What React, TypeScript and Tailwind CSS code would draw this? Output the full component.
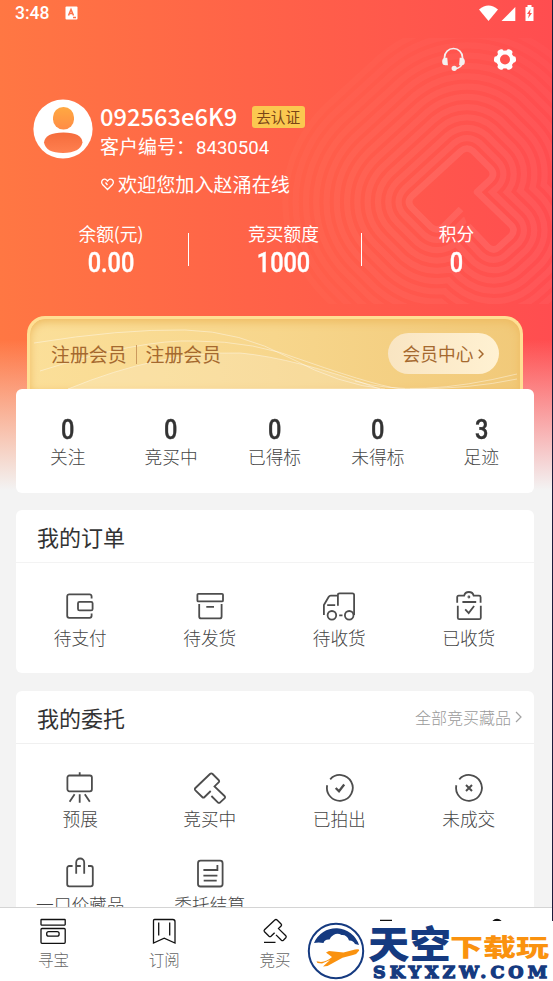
import React from "react";

type Item = {
    label: string;
    icon: React.ReactNode;
}

const stats = [
    { label: "关注", value: "0" },
    { label: "竞买中", value: "0" },
    { label: "已得标", value: "0" },
    { label: "未得标", value: "0" },
    { label: "足迹", value: "3" },
];

const orders: Item[] = [
    {
        label: "待支付",
        icon: <>
            <path d="M27.6 8.6V6.4a2 2 0 0 0-2-2H5.2a2 2 0 0 0-2 2v19.4a2 2 0 0 0 2 2h20.4a2 2 0 0 0 2-2v-2.2"/>
            <rect x="14" y="11.8" width="14.6" height="8.6" rx="1.5"/>
        </>,
    },
    {
        label: "待发货",
        icon: <>
            <rect x="3.4" y="3.8" width="25.6" height="7.6" rx="1"/>
            <path d="M5.2 14v12.4a2 2 0 0 0 2 2h18.4a2 2 0 0 0 2-2V14M12.3 16.8H20"/>
        </>,
    },
    {
        label: "待收货",
        icon: <>
            <path d="M.9 25V15L5.6 7q.8-1.3 2.2-1.3h7.1M14.9 15.8V5q0-1.7 1.7-1.7h12.8q1.7 0 1.7 1.7v20M4.2 15.1h8M16.2 25.3h3.3"/>
            <circle cx="8.9" cy="25.3" r="4.3"/>
            <circle cx="26.2" cy="25.3" r="4.3"/>
        </>,
    },
    {
        label: "已收货",
        icon: <>
            <path d="M4.2 12.7V7.2q0-1.5 1.5-1.5h5.4q.9-3.7 4.8-3.7t4.8 3.7h5.4q1.5 0 1.5 1.5v5.5M9.4 12h13.8M4.8 15.7v12q0 1.5 1.5 1.5h20q1.5 0 1.5-1.5v-12M12.2 19.3l3.5 3.7 5.4-7"/>
            <circle cx="15.9" cy="7" r=".5"/>
        </>,
    },
];

const commissions: Item[] = [
    {
        label: "预展",
        icon: <>
            <rect x="3.4" y="4.5" width="24.5" height="15.8" rx="2"/>
            <path d="M15.7 1.3v3.2M15.7 23.3v8.5M10.6 23.3l-5 7.5M20.8 23.3l5 7.5"/>
        </>,
    },
    {
        label: "竞买中",
        icon: <path d="M16.7 20 10.6 26q-1.2 1.2-2.4 0L1.4 19.4q-1.2-1.2 0-2.4L16 3q1.3-1.3 2.6 0l6 6q1.2 1.2 0 2.4L20.5 15.4l10 9.6q1.2 1.2 0 2.3L26.2 31.3q-1.2 1.2-2.4 0L17.4 25"/>,
    },
    {
        label: "已拍出",
        icon: <>
            <path d="M7.2 8.3A12.9 12.9 0 1 1 4.2 14.3"/>
            <path d="m12.7 17 3.3 3.3 5.2-6.8" strokeWidth="2.3"/>
        </>,
    },
    {
        label: "未成交",
        icon: <>
            <path d="M6.3 8.3A12.9 12.9 0 1 1 3.3 14.3"/>
            <path d="m13 14 6 6M19 14l-6 6" strokeWidth="2"/>
        </>,
    },
    {
        label: "一口价藏品",
        icon: <path d="M8.6 9H5.2a2 2 0 0 0-2 2v16.3a2 2 0 0 0 2 2h21.6a2 2 0 0 0 2-2V11a2 2 0 0 0-2-2H24M12.2 16.7V5.5a4 4 0 0 1 8 0v11.2M12.2 9h4.6"/>,
    },
    {
        label: "委托结算",
        icon: <>
            <rect x="4" y="3.7" width="24.6" height="25.8" rx="2.5"/>
            <path d="M9.4 13h14V8M9.4 18.7h14M9.7 23.7h13"/>
        </>,
    },
];

const tabs: Item[] = [
    {
        label: "寻宝",
        icon: <>
            <rect x="4" y="4.5" width="24.2" height="5.6" rx=".5"/>
            <rect x="4" y="13.5" width="24.2" height="14.8" rx="1"/>
            <rect x="9.7" y="16.6" width="12.4" height="4.6" rx="2"/>
        </>,
    },
    {
        label: "订阅",
        icon: <path d="M5.5 28V5.5q0-1 1-1h18.3q2.2 0 2.2 2.2V28l-10.8-4.8ZM10.7 7.5v13M21.7 7.5v13"/>,
    },
    {
        label: "竞买",
        icon: <path d="M15.6 17.7 12 21.2q-1 .9-2 0l-4.500-4.500q-.9-1 0-2L15.800 5q1.200-1 2.300 0l4 4q1 1 0 2l-2.600 2.600 7.300 7.200q.9 1 0 2l-2.400 2.400q-1 .9-2 0l-5.400-5.300M5 27.400h11.500"/>,
    },
    { label: "", icon: <path d="M10 5.5h12M6 10h20v18H6Z"/> },
    { label: "", icon: <><circle cx="16" cy="10" r="5.5" fill="#111"/><path d="M5 28q0-11 11-11t11 11Z"/></> },
];

const gavel = "M461 209 443 227q-6 5-12 0L412 208q-6-6 0-12L461 151q6-5 12 0l17 17q6 6 0 12L477 192l34 33q5 5 0 11L499 247q-5 5-11 0L468 226";

// evenly spaced rings around the gavel, from the outside in
const rings = Array.from({ length: 13 }, (_, i) => 12 - i);

function Ripples() {
    return (
        <svg className="absolute left-0 top-0" width="552" height="304" viewBox="0 0 552 304" fill="none">
            <mask id="ripples" maskUnits="userSpaceOnUse" x="0" y="0" width="552" height="304">
                <g strokeLinejoin="round" strokeLinecap="butt">
                    {rings.map(k => {
                        const level = Math.round(255 * (k === 0 ? 1 : 0.76 - k * 0.045));
                        return (
                            <g key={k}>
                                <path d={gavel} fill="none" stroke={`rgb(${level},${level},${level})`} strokeWidth={k * 20.6 + 6.5}/>
                                {k > 0 && <path d={gavel} fill="black" stroke="black" strokeWidth={k * 20.6 - 6}/>}
                            </g>
                        )
                    })}
                </g>
            </mask>
            <rect x="280" y="38" width="272" height="266" fill="#fff" fillOpacity=".085" mask="url(#ripples)"/>
        </svg>
    )
}

function Num({ children, className }: { children: React.ReactNode; className?: string }) {
    return (
        <span className={"block scale-x-[0.84] font-[Roboto] text-[28px] leading-7 font-medium [-webkit-text-stroke:0.4px_currentColor] " + (className ?? "")}>
            {children}
        </span>
    )
}

function IconCell({ item }: { item: Item }) {
    return (
        <li className="flex flex-col items-center">
            <svg width="32" height="33" viewBox="0 0 32 33" fill="none" stroke="#4d4d4d" strokeWidth="1.8">{item.icon}</svg>
            <span className="mt-[2px] text-[17.7px] leading-6 font-light whitespace-nowrap text-[#444]">{item.label}</span>
        </li>
    )
}

function StatusBar() {
    return (
        <div className="flex h-[26px] items-center justify-between pr-[18px] pl-[15px] text-white">
            <div className="flex items-center gap-4">
                <span className="font-[Roboto] text-[17.5px] leading-5 font-medium">3:48</span>
                <svg width="13" height="14" viewBox="0 0 13 14">
                    <rect x=".5" y=".5" width="12" height="13" rx="1" fill="#fff"/>
                    <path d="m3.5 9.5 2.5-6 2.5 6M4.5 7.5h3M8 11.5h3" fill="none" stroke="#ff7048" strokeWidth="1.5"/>
                </svg>
            </div>
            <svg width="56" height="17" viewBox="0 0 56 17" fill="#fff">
                <path d="M0 4.5Q9.5-3.5 19 4.5L9.5 16Z"/>
                <path d="M36.3 2v14H22.5Z"/>
                <path d="M46.500 2h2V0h4v2h2v14h-8Z"/>
                <path d="m51.500 4-3.500 5h2l-1 4.500L53 8h-2Z" fill="#ff5250"/>
            </svg>
        </div>
    )
}

function Watermark() {
    return (
        <svg className="absolute bottom-0 left-[300px]" width="253" height="60" viewBox="0 0 253 60">
            <rect x="8" width="245" height="60" fill="#fff"/>
            <circle cx="36" cy="30" r="27.2" fill="#fff" stroke="#153a80" strokeWidth="2"/>
            <path d="M14 22A24 24 0 0 1 59 24l-4-1q-2-4-6-3.5-2-6-7.5-5.5-4-2.5-8 0-3 1.5-4 4.5-5-.5-6 3.5-5-1-9.500 0Z" fill="#153a80"/>
            <path d="M16.5 40.2 21 41q6-.5 11-5l-6-4.5 3-1.5 14.5 1.500L55 28.500q5-.7 4 1.300-2 3.500-6 4.300l-10.500 2.700-15 8.200-4.500.500 7-6.500-8 3.500-4.500-.5Z" fill="#fa920f"/>
            <g fontFamily="'Noto Sans CJK SC', sans-serif" fontWeight="900">
                <text x="68" y="36.500" fontSize="38" textLength="83" lengthAdjust="spacingAndGlyphs" fill="#153a80">天空</text>
                <text x="150" y="34.500" fontSize="24" textLength="99" lengthAdjust="spacingAndGlyphs" fill="#fa920f">下载玩</text>
            </g>
            <text x="73" y="57" fontSize="17.5" fontFamily="'DejaVu Serif', serif" fontWeight="700" textLength="174" lengthAdjust="spacing" fill="#153a80" stroke="#153a80" strokeWidth="1.3">SKYXZW.COM</text>
        </svg>
    )
}

export default function App() {
    return (
        <main className="relative flex h-[981px] w-[553px] flex-col overflow-hidden bg-[#f3f3f3] bg-[linear-gradient(to_bottom,transparent_340px,#f3f3f3_490px),linear-gradient(to_right,#ff7743,#ff6348_45%,#ff4d50)] font-['Noto_Sans_CJK_SC',sans-serif]">
            <Ripples/>
            <div className="absolute inset-y-0 right-0 w-px bg-[#1b1b3a]"></div>
            <header className="relative h-[316px] shrink-0 text-white">
                <StatusBar/>
                <div className="mt-[21px] flex justify-end gap-[28px] pr-[36px]">
                    <svg width="24" height="25" viewBox="0 0 24 25" fill="none" stroke="#f4f0f0" strokeWidth="1.7">
                        <path d="M3.5 12V10.500a9 9 0 0 1 18 0V12M21.500 15q-.5 6-8 6.800"/>
                        <path d="M4.500 11.500q-2.500 0-2.500 3t2.500 3h1.500l-.5-6ZM20.500 11.500q2.500 0 2.500 3t-2.500 3h-1.500l.5-6Z" fill="#f4f0f0"/>
                        <circle cx="13.2" cy="21.3" r="1.8" fill="#f4f0f0"/>
                    </svg>
                    <svg width="24" height="25" viewBox="-12 -12.5 24 25">
                        <g fill="#fff">
                            <circle r="9"/>
                            <rect x="-11" y="-3.2" width="22" height="6.4" rx="2.4"/>
                            <rect x="-11" y="-3.2" width="22" height="6.4" rx="2.4" transform="rotate(60)"/>
                            <rect x="-11" y="-3.2" width="22" height="6.4" rx="2.4" transform="rotate(120)"/>
                        </g>
                        <circle r="5" fill="#ff5450"/>
                    </svg>
                </div>
                <div className="mt-[27px] flex pl-[33px]">
                    <svg width="60" height="60" viewBox="0 0 60 60">
                        <defs>
                            <linearGradient id="head" x2="0" y2="1">
                                <stop stopColor="#ffa942"/>
                                <stop offset="1" stopColor="#ff8c45"/>
                            </linearGradient>
                            <linearGradient id="body" x2="0" y2="1">
                                <stop stopColor="#f56c3c"/>
                                <stop offset="1" stopColor="#ff8050"/>
                            </linearGradient>
                        </defs>
                        <circle cx="30" cy="30" r="29.6" fill="#fff"/>
                        <rect x="20" y="8" width="21" height="22.5" rx="10.3" fill="url(#head)"/>
                        <path d="M11 43.5q1-10 19.500-10t19 10q-2 10-19.500 10.500-17 0-19-10.500Z" fill="url(#body)"/>
                    </svg>
                    <div className="ml-[7px] flex flex-col">
                        <div className="mt-[3px] flex h-7 items-center">
                            <span className="text-[23.7px] leading-7 font-medium">092563e6K9</span>
                            <span className="mt-px ml-[14.5px] h-[22px] rounded-[3px] bg-[#fbc850] px-[4.5px] text-[14.7px] leading-[22px] text-[#7a4417]">去认证</span>
                        </div>
                        <p className="mt-px text-[19px] leading-[30px]">客户编号：<span className="ml-px font-[Roboto] text-[18.6px]">8430504</span></p>
                        <p className="mt-[6px] flex items-center text-[19.1px] leading-[30px]">
                            <svg className="mr-[3px]" width="15" height="14" viewBox="0 0 15 14" fill="none" stroke="#fff" strokeWidth="1.3">
                                <path d="M7.500 12.500 2.500 7.500Q.8 5 2.600 3 5 .8 7.500 4 10 .8 12.400 3q1.800 2 .1 4.500ZM5.500 5.500l2 2.500"/>
                            </svg>
                            欢迎您加入赵涌在线
                        </p>
                    </div>
                </div>
                <div className="mt-[22px] flex text-center">
                    <div className="w-[188px] pl-[34px]">
                        <p className="text-[17.7px] leading-6">余额(元)</p>
                        <Num className="mt-[4px]">0.00</Num>
                    </div>
                    <div className="mt-[12px] h-[33px] w-px bg-white"></div>
                    <div className="w-[172px] pl-[17px]">
                        <p className="text-[17.7px] leading-6">竞买额度</p>
                        <Num className="mt-[4px]">1000</Num>
                    </div>
                    <div className="mt-[12px] h-[33px] w-px bg-white"></div>
                    <div className="w-[172px] pl-[17px]">
                        <p className="text-[17.7px] leading-6">积分</p>
                        <Num className="mt-[4px]">0</Num>
                    </div>
                </div>
            </header>

            <section className="relative mr-[30px] ml-[27px] flex h-[73px] shrink-0 items-start justify-between overflow-hidden rounded-t-[18px] border-[3px] border-b-0 border-[#ffdf94] bg-linear-to-r from-[#fbdf99] via-[#f7d68c] to-[#f1c979] text-[#a5692f] shadow-[inset_0_3px_8px_#eebb62]">
                <svg className="absolute inset-0" width="490" height="70" viewBox="0 0 490 70" fill="none" stroke="#fff" strokeOpacity=".4">
                    <path d="M4 24Q90 10 155 11q55 1 105 28t95 31" />
                    <path d="M10 52Q110 20 165 22q60 0 110 20 80 28 100 28"/>
                    <path d="M38 70Q130 32 210 34q55 5 140 36Z" fill="#fff" fillOpacity=".16"/>
                    <path d="M325 62q60 18 162-7M380 70q60 0 107-10"/>
                </svg>
                <div className="relative mt-[21px] ml-[21px] flex items-center text-[18.9px] leading-7">
                    <span>注册会员</span>
                    <span className="mx-[9px] h-[19px] w-px bg-[#cc9a5e]"></span>
                    <span>注册会员</span>
                </div>
                <div className="relative mt-[14px] mr-[21px] flex h-[41px] w-[111px] items-center justify-center gap-[5px] rounded-full bg-linear-to-r from-[#f9e5c2] to-[#fff1d2] text-[17.7px]">
                    会员中心
                    <svg width="6" height="10" viewBox="0 0 6 10" fill="none" stroke="#a5692f" strokeWidth="1.5"><path d="m.8.8 4.200 4.200-4.200 4.200"/></svg>
                </div>
            </section>

            <section className="relative mr-[19px] ml-4 grid h-[103.5px] shrink-0 grid-cols-5 rounded-md bg-white pt-[27px] pr-px text-center">
                {stats.map(stat => (
                    <div key={stat.label}>
                        <Num className="text-[#333]">{stat.value}</Num>
                        <p className="text-[17.7px] leading-6 font-light text-[#444]">{stat.label}</p>
                    </div>
                ))}
            </section>

            <section className="relative mt-[17.5px] mr-[19px] ml-4 h-[163px] shrink-0 rounded-md bg-white">
                <h2 className="h-[53px] border-b border-[#f3f3f3] pl-[21px] text-[22px] leading-[53px] text-[#333]">我的订单</h2>
                <ul className="mr-[.5px] -ml-[.5px] grid grid-cols-4 pt-[27px]">
                    {orders.map(item => <IconCell key={item.label} item={item}/>)}
                </ul>
            </section>

            <section className="relative mt-[18px] mr-[19px] ml-4 min-h-0 flex-1 overflow-hidden rounded-t-md bg-white">
                <div className="flex h-[53px] items-center justify-between border-b border-[#f0f0f0] pr-[12px] pl-[21px]">
                    <h2 className="text-[22px] leading-[53px] text-[#333]">我的委托</h2>
                    <span className="flex items-center gap-[4px] text-[16px] font-light text-[#999]">
                        全部竞买藏品
                        <svg width="7" height="12" viewBox="0 0 7 12" fill="none" stroke="#a3a3a3" strokeWidth="1.2"><path d="m1 1 5 5-5 5"/></svg>
                    </span>
                </div>
                <ul className="mr-[.5px] -ml-[.5px] grid grid-cols-4 gap-y-[27px] pt-[26.5px]">
                    {commissions.map(item => <IconCell key={item.label} item={item}/>)}
                </ul>
            </section>

            <nav className="relative mr-px -ml-[2px] flex h-[74px] shrink-0 border-t border-[#d4d4d4] bg-white">
                {tabs.map((tab, index) => (
                    <div key={index} className="flex flex-1 flex-col items-center pt-[7px]">
                        <svg width="32" height="32" viewBox="0 0 32 32" fill="none" stroke="#111" strokeWidth="1.3">{tab.icon}</svg>
                        <span className="mt-px text-[15.5px] leading-[23px] font-light text-[#666]">{tab.label}</span>
                    </div>
                ))}
            </nav>
            <Watermark/>
        </main>
    )
}
